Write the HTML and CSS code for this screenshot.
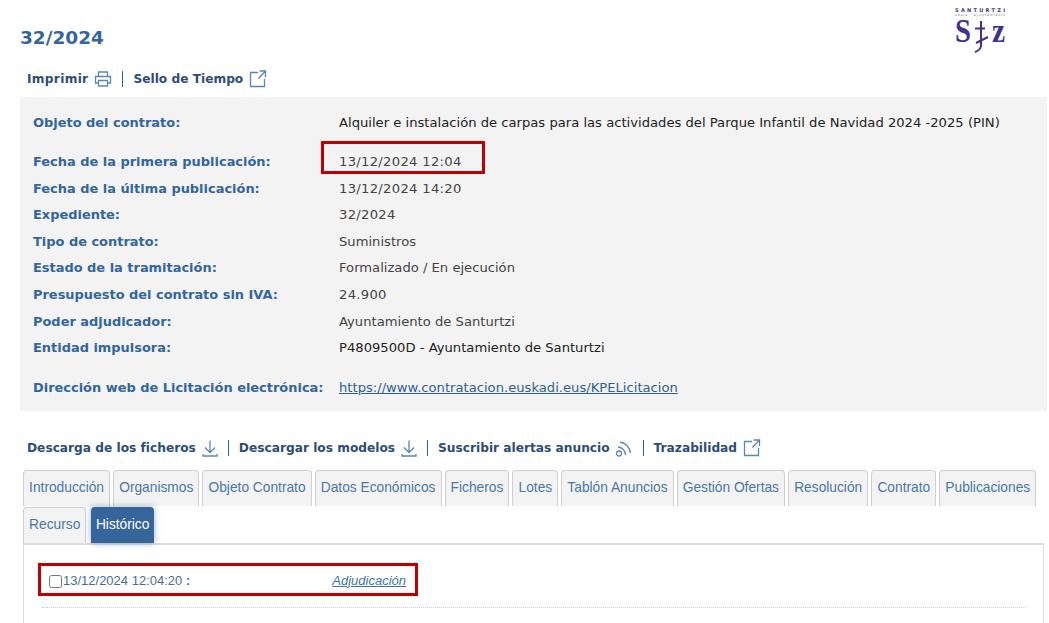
FILE: index.html
```html
<!DOCTYPE html>
<html lang="es">
<head>
<meta charset="utf-8">
<title>32/2024</title>
<link rel="stylesheet" href="styles.css">
</head>
<body>
<div class="page">
  <header class="top">
    <h1 class="title">32/2024</h1>
    <svg class="logo" width="54" height="54" viewBox="0 0 54 54" aria-label="Santurtzi">
      <text x="1" y="6" class="logo-name" textLength="50" lengthAdjust="spacing">SANTURTZI</text>
      <text x="1" y="10" class="logo-sub" textLength="50" lengthAdjust="spacing">udala · ayuntamiento</text>
      <text x="1" y="36" class="logo-big" textLength="16" lengthAdjust="spacingAndGlyphs">S</text>
      <text x="38" y="36" class="logo-big" textLength="13" lengthAdjust="spacingAndGlyphs">z</text>
      <path class="logo-t" d="M27 15V40Q26.500 44 21 46M21 22.500H31M22 37L34 31"/>
    </svg>
  </header>

  <nav class="actions actions-top">
    <a class="action action-print">Imprimir
      <svg class="ico" width="18" height="18" viewBox="0 0 18 18"><path d="M4.500 6V2h9v4M4.500 13H1.500V6.500h15V13h-3M4.500 10.500h9V16h-9z"/></svg>
    </a>
    <span class="sep"></span>
    <a class="action">Sello de Tiempo
      <svg class="ico ico-ext" width="18" height="18" viewBox="0 0 18 18"><path d="M9 2.500H1.500v14h14V9M10.500 1h6v6M16.500 1l-7 7.500"/></svg>
    </a>
  </nav>

  <section class="panel">
    <dl class="grid">
      <dt class="first">Objeto del contrato:</dt><dd class="first dark">Alquiler e instalación de carpas para las actividades del Parque Infantil de Navidad 2024 -2025 (PIN)</dd>
      <dt>Fecha de la primera publicación:</dt><dd class="num">13/12/2024 12:04</dd>
      <dt>Fecha de la última publicación:</dt><dd class="num">13/12/2024 14:20</dd>
      <dt>Expediente:</dt><dd class="num">32/2024</dd>
      <dt>Tipo de contrato:</dt><dd>Suministros</dd>
      <dt>Estado de la tramitación:</dt><dd>Formalizado / En ejecución</dd>
      <dt>Presupuesto del contrato sin IVA:</dt><dd class="num">24.900</dd>
      <dt>Poder adjudicador:</dt><dd>Ayuntamiento de Santurtzi</dd>
      <dt>Entidad impulsora:</dt><dd class="dark">P4809500D - Ayuntamiento de Santurtzi</dd>
      <dt class="last">Dirección web de Licitación electrónica:</dt><dd class="last"><a class="link">https://www.contratacion.euskadi.eus/KPELicitacion</a></dd>
    </dl>
  </section>

  <nav class="actions actions-mid">
    <a class="action">Descarga de los ficheros
      <svg class="ico ico-dl" width="16" height="18" viewBox="0 0 16 18"><path d="M8 1.500V13M3 8.500L8 13.500L13 8.500M1 15v2h14v-2"/></svg>
    </a>
    <span class="sep"></span>
    <a class="action">Descargar los modelos
      <svg class="ico ico-dl" width="16" height="18" viewBox="0 0 16 18"><path d="M8 1.500V13M3 8.500L8 13.500L13 8.500M1 15v2h14v-2"/></svg>
    </a>
    <span class="sep"></span>
    <a class="action action-rss">Suscribir alertas anuncio
      <svg class="ico ico-rss" width="18" height="18" viewBox="0 0 18 18"><circle cx="4" cy="14.500" r="2.500"/><path d="M3 8A8 8 0 0 1 10.500 16M5 3A12.500 12.500 0 0 1 15.500 14"/></svg>
    </a>
    <span class="sep"></span>
    <a class="action">Trazabilidad
      <svg class="ico ico-ext" width="18" height="18" viewBox="0 0 18 18"><path d="M9 2.500H1.500v14h14V9M10.500 1h6v6M16.500 1l-7 7.500"/></svg>
    </a>
  </nav>

  <ul class="tabs">
    <li class="tab">Introducción</li>
    <li class="tab">Organismos</li>
    <li class="tab">Objeto Contrato</li>
    <li class="tab">Datos Económicos</li>
    <li class="tab">Ficheros</li>
    <li class="tab">Lotes</li>
    <li class="tab">Tablón Anuncios</li>
    <li class="tab">Gestión Ofertas</li>
    <li class="tab">Resolución</li>
    <li class="tab">Contrato</li>
    <li class="tab">Publicaciones</li>
    <li class="tab">Recurso</li>
    <li class="tab tab-active">Histórico</li>
  </ul>

  <section class="history">
    <div class="entry">
      <label class="entry-date"><input type="checkbox" class="check">13/12/2024 12:04:20 <b>:</b></label>
      <a class="entry-link">Adjudicación</a>
    </div>
    <div class="rule"></div>
  </section>

  <div class="mark mark-date"></div>
  <div class="mark mark-entry"></div>
</div>
</body>
</html>
```
FILE: styles.css
```css
* { box-sizing: border-box; }
html, body { margin: 0; padding: 0; height: 623px; overflow: hidden; background: #fff; }
body { font-family: "DejaVu Sans", Verdana, sans-serif; font-size: 13.150px; color: #444; }
.page { position: relative; width: 1049px; height: 623px; overflow: hidden; }

.top { height: 62px; padding-left: 20px; position: relative; }
.title { margin: 0; padding-top: 27px; font-size: 18.500px; line-height: 22px; font-weight: bold; color: #36659b; }
.logo { position: absolute; left: 954px; top: 6px; }
.logo-name { font: bold 5px "DejaVu Sans", sans-serif; fill: #41318c; }
.logo-sub { font: 3px "DejaVu Sans", sans-serif; fill: #6b5fa8; }
.logo-big { font: bold 34px "Liberation Serif", serif; fill: #41318c; }
.logo-t { fill: none; stroke: #41318c; stroke-width: 2; }

.actions { display: flex; align-items: center; padding-left: 27px; color: #2c4d75; font-weight: bold; font-size: 12.200px; }
.actions-top { height: 35px; padding-bottom: 2px; }
.actions-mid { height: 32px; margin-top: 21px; }
.action { display: flex; align-items: center; gap: 6px; white-space: nowrap; }
.action-print { letter-spacing: .3px; }
.action-rss { gap: 5px; }
.sep { width: 1px; height: 16px; background: #2c5f93; margin: 0 10px 0 10px; }
.ico { fill: none; stroke: #5b86b3; stroke-width: 1.300; flex: none; }

.panel { margin-left: 20px; width: 1027px; height: 314px; background: #f3f3f3; padding-top: 13px; }
.grid { display: grid; grid-template-columns: 306px 1fr; margin: 0; padding-left: 13px; }
.grid dt, .grid dd { margin: 0; height: 26.600px; line-height: 26.600px; white-space: nowrap; }
.grid dt { font-weight: bold; font-size: 12.950px; color: #32669c; }
.grid .first { height: 39px; line-height: 26px; }
.grid .last { height: 39px; line-height: 52px; }
.grid .dark { color: #222; }
.grid .num { letter-spacing: .3px; }
.link { color: #2f5f8f; text-decoration: underline; }

.tabs { list-style: none; margin: 6px 0 -1px; padding: 0 0 0 23px; display: flex; flex-wrap: wrap; column-gap: 3px; width: 1040px; font-family: "Liberation Sans", Arial, sans-serif; font-size: 13.750px; }
.tab { height: 36px; line-height: 33px; padding: 0 5.100px; margin-bottom: 1px; background: #f3f3f3; color: #4a77a6; border: 1px solid #cfcfcf; border-bottom: 0; border-radius: 4px 4px 0 0; }
.tab-active { margin-left: 2px; padding: 0 3.500px; background: #36659b; color: #fff; border-color: #36659b; box-shadow: 0 0 6px rgba(54,101,155,.5); }

.history { margin-left: 23px; width: 1021px; height: 100px; border: 1px solid #dedede; border-width: 2px 1px 1px; padding: 20px 18px 0 25px; font-family: "Liberation Sans", Arial, sans-serif; font-size: 13px; color: #4a6d94; }
.entry { display: flex; justify-content: space-between; align-items: center; height: 30px; width: 357px; }
.entry-date { display: flex; align-items: center; white-space: pre; }
.check { margin: 3px 1px 0 0; width: 13px; height: 13px; }
.entry-link { font-style: italic; text-decoration: underline; color: #3f74aa; }
.rule { margin: 12px 0 0 -7px; width: 984px; border-top: 1px dotted #ccc; }

.mark { position: absolute; border: 3px solid #c00000; }
.mark-date { left: 321px; top: 141px; width: 164px; height: 33px; }
.mark-entry { left: 38px; top: 563px; width: 380px; height: 33px; }
```
